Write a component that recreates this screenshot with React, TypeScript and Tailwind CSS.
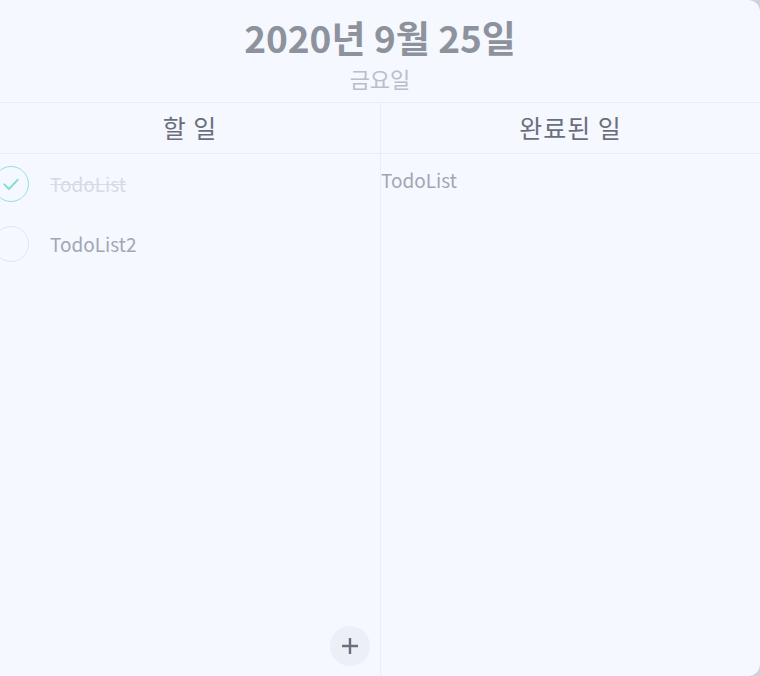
import React from 'react';

const font = { fontFamily: '"Noto Sans CJK KR", "Noto Sans", sans-serif' };

type Todo = { id: number; text: string; done: boolean };

const todos: Todo[] = [
  { id: 1, text: 'TodoList', done: true },
  { id: 2, text: 'TodoList2', done: false },
];

const CheckCircle: React.FC<{ done: boolean }> = ({ done }) => (
  <div
    className={`ml-[-7px] w-[36px] h-[36px] shrink-0 rounded-full border-[1.5px] flex items-center justify-center ${
      done ? 'border-[#8fe5d5]' : 'border-[#e1e5ee]'
    }`}
  >
    {done && (
      <svg className="w-[20px] h-[20px]" viewBox="0 0 24 24" fill="none" stroke="#7fe0cf" strokeWidth="2.4" strokeLinecap="round" strokeLinejoin="round">
        <path d="M4 12.5l5.5 5.5L20 7" />
      </svg>
    )}
  </div>
);

export default function App() {
  return (
    <div className="w-[760px] h-[676px] bg-[#cfd1dc]" style={font}>
      <div className="w-full h-full bg-[#f5f8ff] rounded-r-[12px] flex flex-col overflow-hidden">
        {/* Date header */}
        <div className="pt-[15px] pb-[10px] flex flex-col items-center border-b border-[#e8edf6]">
          <h1 className="text-[37px] leading-[44px] font-bold text-[#8e929c]">2020년 9월 25일</h1>
          <p className="mt-[5px] text-[22px] leading-[28px] text-[#babecb]">금요일</p>
        </div>

        {/* Columns */}
        <div className="flex-1 grid grid-cols-[381px_1fr]">
          <div className="flex flex-col border-r border-[#e8edf6]">
            <div className="h-[51px] flex items-center justify-center border-b border-[#e8edf6]">
              <span className="text-[25px] tracking-[1px] text-[#6b6f7b]">할 일</span>
            </div>
            <div className="flex-1 flex flex-col">
              {todos.map((t) => (
                <div key={t.id} className="h-[60px] flex items-center gap-[21px]">
                  <CheckCircle done={t.done} />
                  <span
                    className={`text-[19px] ${
                      t.done ? 'line-through text-[#d6dae3] decoration-[#d6dae3]' : 'text-[#a2a6b3]'
                    }`}
                  >
                    {t.text}
                  </span>
                </div>
              ))}
            </div>
            <div className="flex justify-end pr-[10px] pb-[10px]">
              <button className="w-[40px] h-[40px] rounded-full bg-[#eceff6] flex items-center justify-center">
                <svg className="w-[20px] h-[20px]" viewBox="0 0 20 20" fill="none" stroke="#6b6f7b" strokeWidth="2.4">
                  <path d="M10 2v16M2 10h16" />
                </svg>
              </button>
            </div>
          </div>

          <div className="flex flex-col">
            <div className="h-[51px] flex items-center justify-center border-b border-[#e8edf6]">
              <span className="text-[25px] tracking-[1px] text-[#6b6f7b]">완료된 일</span>
            </div>
            <div className="h-[52px] flex items-center">
              <span className="text-[19px] text-[#a2a6b3]">TodoList</span>
            </div>
          </div>
        </div>
      </div>
    </div>
  );
}
